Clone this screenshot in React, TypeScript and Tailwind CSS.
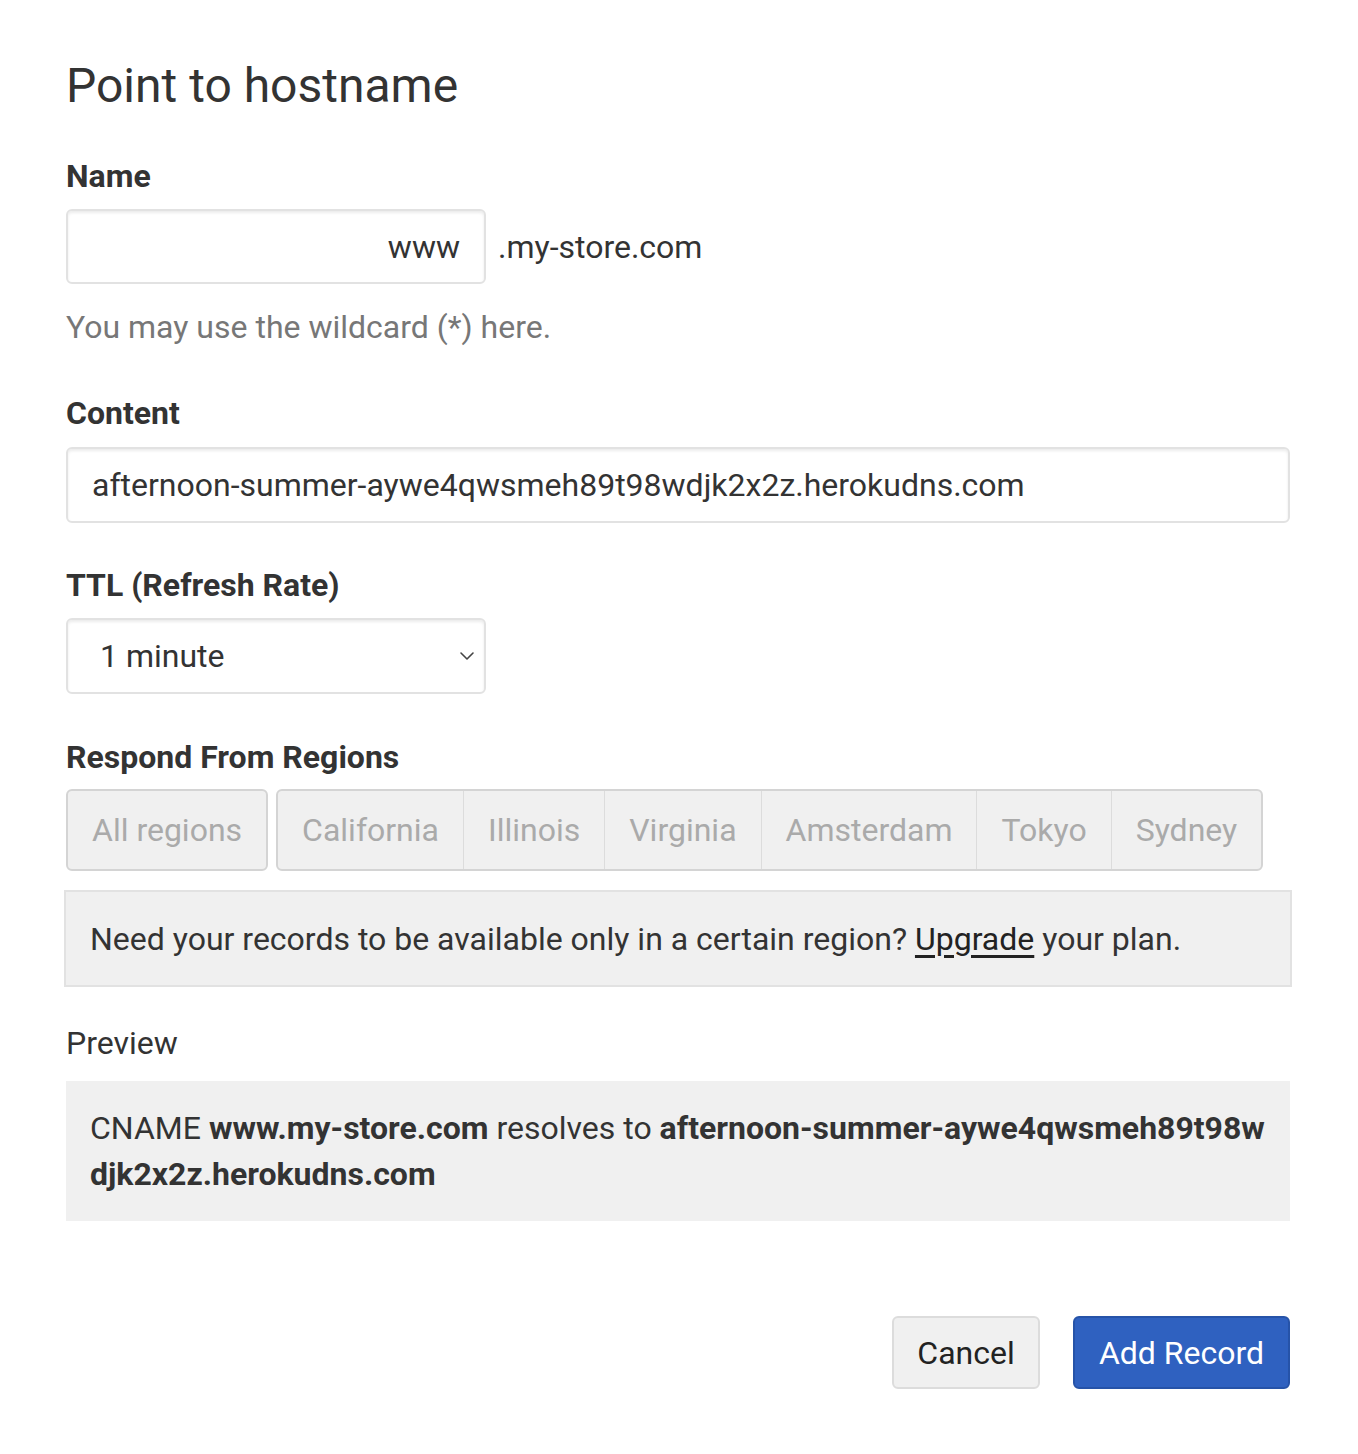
import React from "react";

export default function App() {
  const regions = ["California", "Illinois", "Virginia", "Amsterdam", "Tokyo", "Sydney"];
  return (
    <div className="min-h-[1454px] w-[1358px] bg-white text-[#333]" style={{ fontFamily: "Roboto, 'Liberation Sans', sans-serif" }}>
      <div className="pl-[66px] pr-[68px] pt-[56px] pb-[64px]">
        <h1 className="text-[48px] leading-[60px] font-normal text-[#333]">Point to hostname</h1>

        <div className="mt-[42px] text-[32px] leading-[36px] font-bold">Name</div>
        <div className="mt-[15px] flex items-center">
          <div className="flex h-[75px] w-[420px] items-center justify-end rounded-[6px] border-2 border-[#e2e2e2] bg-white px-[24px] text-[32px] shadow-[inset_0_2px_3px_rgba(0,0,0,0.08)]">
            www
          </div>
          <span className="ml-[12px] text-[32px]">.my-store.com</span>
        </div>
        <div className="mt-[25px] text-[32px] leading-[36px] text-[#777]">You may use the wildcard (*) here.</div>

        <div className="mt-[50px] text-[32px] leading-[36px] font-bold">Content</div>
        <div className="mt-[16px] flex h-[76px] w-full items-center rounded-[6px] border-2 border-[#e2e2e2] bg-white px-[24px] text-[32px] shadow-[inset_0_2px_3px_rgba(0,0,0,0.08)]">
          afternoon-summer-aywe4qwsmeh89t98wdjk2x2z.herokudns.com
        </div>

        <div className="mt-[44px] text-[32px] leading-[36px] font-bold">TTL (Refresh Rate)</div>
        <div className="mt-[15px] flex h-[76px] w-[420px] items-center justify-between rounded-[6px] border-2 border-[#e2e2e2] bg-white pl-[32px] pr-[7px] text-[32px] shadow-[inset_0_2px_3px_rgba(0,0,0,0.08)]">
          <span>1 minute</span>
          <svg width="20" height="20" viewBox="0 0 20 20" fill="none" stroke="#444" strokeWidth="1.6" strokeLinecap="round" strokeLinejoin="round">
            <path d="M4 7l6 6 6-6" />
          </svg>
        </div>

        <div className="mt-[45px] text-[32px] leading-[36px] font-bold">Respond From Regions</div>
        <div className="mt-[14px] flex gap-[8px]">
          <div className="flex h-[82px] items-center rounded-[6px] border-2 border-[#d4d4d4] bg-[#f0f0f0] px-[24px] text-[32px] text-[#aaa]">
            All regions
          </div>
          <div className="flex h-[82px] rounded-[6px] border-2 border-[#d4d4d4] bg-[#f0f0f0] text-[32px] text-[#aaa]">
            {regions.map((r, i) => (
              <div key={r} className={`flex items-center px-[24px] ${i > 0 ? "border-l border-[#dcdcdc]" : ""}`}>
                {r}
              </div>
            ))}
          </div>
        </div>

        <div className="-mx-[2px] mt-[19px] flex h-[97px] items-center border-2 border-[#e2e2e2] bg-[#f0f0f0] px-[24px] text-[32px] text-[#333]">
          <span>
            Need your records to be available only in a certain region?{" "}
            <span className="underline underline-offset-[5px] text-[#222]">Upgrade</span> your plan.
          </span>
        </div>

        <div className="mt-[38px] text-[32px] leading-[36px]">Preview</div>
        <div className="mt-[20px] break-all bg-[#f0f0f0] px-[24px] py-[24px] text-[32px] leading-[46px]">
          CNAME <b className="font-bold">www.my-store.com</b> resolves to{" "}
          <b className="font-bold">afternoon-summer-aywe4qwsmeh89t98wdjk2x2z.herokudns.com</b>
        </div>

        <div className="mt-[95px] flex justify-end gap-[33px]">
          <button className="h-[73px] w-[148px] rounded-[6px] border-2 border-[#dcdcdc] bg-[#f0f0f0] text-[32px] text-[#222]">Cancel</button>
          <button className="h-[73px] w-[217px] rounded-[6px] border-2 border-[#2653a8] bg-[#2f61c0] text-[32px] text-white">Add Record</button>
        </div>
      </div>
    </div>
  );
}
